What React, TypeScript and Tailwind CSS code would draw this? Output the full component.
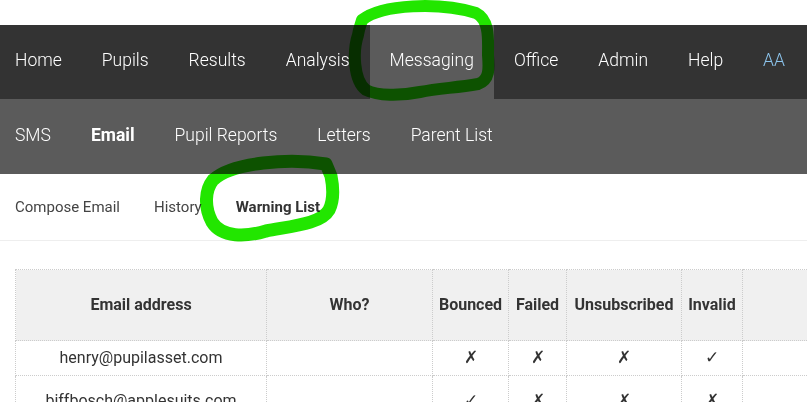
import React from "react";

const topNav = ["Home", "Pupils", "Results", "Analysis", "Messaging", "Office", "Admin", "Help"];
const subNav = ["SMS", "Email", "Pupil Reports", "Letters", "Parent List"];

const rows = [
  { email: "henry@pupilasset.com", who: "", b: false, f: false, u: false, i: true, h: "h-[35px]" },
  { email: "biffbosch@applesuits.com", who: "", b: true, f: false, u: false, i: false, h: "h-[50px]" },
];

const Mark = ({ ok }: { ok: boolean }) => (
  <span className="font-['DejaVu_Sans',sans-serif] font-extralight text-[17px] text-[#333]">{ok ? "✓" : "✗"}</span>
);

export default function App() {
  return (
    <div className="relative w-[807px] h-[402px] overflow-hidden bg-white font-['Roboto',sans-serif]">
      <div className="h-[25px]" />
      <nav className="h-[74px] bg-[#333333] flex items-stretch -ml-[5px]">
        {topNav.map((t) => (
          <div
            key={t}
            className={`px-5 pb-[4px] flex items-center text-[17.5px] font-light text-white ${t === "Messaging" ? "bg-[#5b5b5b]" : ""}`}
          >
            {t}
          </div>
        ))}
        <div className="px-5 pb-[4px] flex items-center text-[17.5px] font-light text-[#8cc4ec]">AA</div>
      </nav>
      <nav className="h-[75px] bg-[#5b5b5b] flex items-stretch -ml-[5px]">
        {subNav.map((t) => (
          <div
            key={t}
            className={`px-5 pb-[2px] flex items-center text-[17.5px] text-white ${t === "Email" ? "font-bold" : "font-light"}`}
          >
            {t}
          </div>
        ))}
      </nav>
      <div className="h-[67px] border-b border-[#eeeeee] flex items-center -ml-[2px]">
        <div className="px-[17px] text-[15px] text-[#444]">Compose Email</div>
        <div className="px-[17px] text-[15px] text-[#444]">History</div>
        <div className="px-[17px] text-[15px] font-bold text-[#333]">Warning List</div>
      </div>
      <div className="pt-[28px] pl-[15px]">
        <table className="border-collapse w-[900px] table-fixed text-[16px] text-[#333]">
          <colgroup>
            <col className="w-[251px]" />
            <col className="w-[166px]" />
            <col className="w-[76px]" />
            <col className="w-[58px]" />
            <col className="w-[115px]" />
            <col className="w-[61px]" />
            <col />
          </colgroup>
          <thead>
            <tr className="h-[71px] bg-[#f0f0f0]">
              {["Email address", "Who?", "Bounced", "Failed", "Unsubscribed", "Invalid", ""].map((h, idx) => (
                <th key={idx} className="border border-dotted border-[#cccccc] font-bold text-center px-0">
                  {h}
                </th>
              ))}
            </tr>
          </thead>
          <tbody>
            {rows.map((r) => (
              <tr key={r.email} className={r.h}>
                <td className="border border-dotted border-[#cccccc] text-center">{r.email}</td>
                <td className="border border-dotted border-[#cccccc] text-center">{r.who}</td>
                <td className="border border-dotted border-[#cccccc] text-center"><Mark ok={r.b} /></td>
                <td className="border border-dotted border-[#cccccc] text-center"><Mark ok={r.f} /></td>
                <td className="border border-dotted border-[#cccccc] text-center"><Mark ok={r.u} /></td>
                <td className="border border-dotted border-[#cccccc] text-center"><Mark ok={r.i} /></td>
                <td className="border border-dotted border-[#cccccc]" />
              </tr>
            ))}
          </tbody>
        </table>
      </div>
      <svg
        className="absolute inset-0 pointer-events-none mix-blend-multiply"
        width="807"
        height="402"
        viewBox="0 0 807 402"
      >
        <path
          d="M 362 20 C 382 4, 440 2, 476 13 C 490 20, 488 40, 488 55 C 489 68, 490 80, 478 84 C 455 88, 440 88, 420 92 C 400 96, 378 96, 366 90 C 353 80, 353 50, 358 35 C 359 28, 361 24, 362 20 Z"
          fill="none"
          stroke="#22e600"
          strokeWidth="12"
          strokeLinejoin="round"
        />
        <path
          d="M 213 180 C 232 162, 290 158, 326 164 L 331 176 C 333 186, 334 200, 329 210 C 321 224, 292 226, 266 231 C 246 237, 222 238, 212 222 C 204 207, 205 190, 213 180 Z"
          fill="none"
          stroke="#22e600"
          strokeWidth="13"
          strokeLinejoin="round"
        />
      </svg>
    </div>
  );
}
